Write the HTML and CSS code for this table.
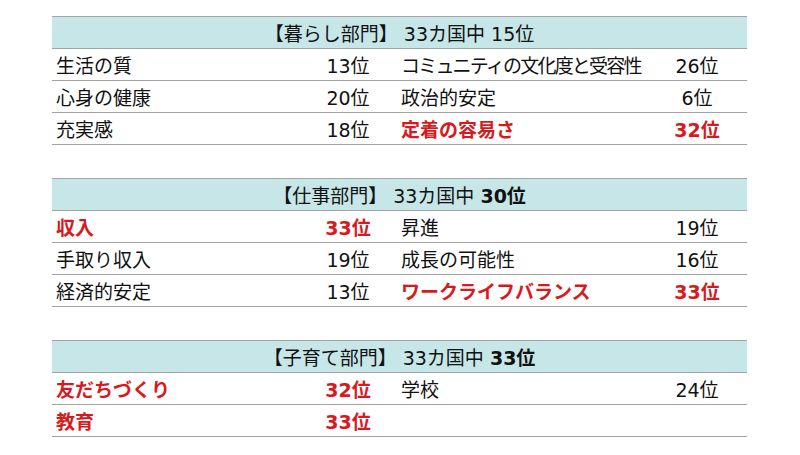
FILE: index.html
```html
<!DOCTYPE html>
<html lang="ja">
<head>
<meta charset="utf-8">
<title>部門別ランキング</title>
<link rel="stylesheet" href="styles.css">
</head>
<body>
<main class="page">
  <section class="block">
    <div class="head">【暮らし部門】 33カ国中 15位</div>
    <div class="row">
      <span class="label">生活の質</span><span class="rank">13位</span>
      <span class="label label-r tight">コミュニティの文化度と受容性</span><span class="rank">26位</span>
    </div>
    <div class="row">
      <span class="label">心身の健康</span><span class="rank">20位</span>
      <span class="label label-r">政治的安定</span><span class="rank">6位</span>
    </div>
    <div class="row">
      <span class="label">充実感</span><span class="rank">18位</span>
      <span class="label label-r hot">定着の容易さ</span><span class="rank hot">32位</span>
    </div>
  </section>

  <section class="block">
    <div class="head">【仕事部門】 33カ国中 <b>30位</b></div>
    <div class="row">
      <span class="label hot">収入</span><span class="rank hot">33位</span>
      <span class="label label-r">昇進</span><span class="rank">19位</span>
    </div>
    <div class="row">
      <span class="label">手取り収入</span><span class="rank">19位</span>
      <span class="label label-r">成長の可能性</span><span class="rank">16位</span>
    </div>
    <div class="row">
      <span class="label">経済的安定</span><span class="rank">13位</span>
      <span class="label label-r hot">ワークライフバランス</span><span class="rank hot">33位</span>
    </div>
  </section>

  <section class="block">
    <div class="head">【子育て部門】 33カ国中 <b>33位</b></div>
    <div class="row">
      <span class="label hot">友だちづくり</span><span class="rank hot">32位</span>
      <span class="label label-r">学校</span><span class="rank">24位</span>
    </div>
    <div class="row">
      <span class="label hot">教育</span><span class="rank hot">33位</span>
      <span class="label label-r"></span><span class="rank"></span>
    </div>
  </section>
</main>
</body>
</html>
```

FILE: styles.css
```css
html, body {
  margin: 0;
  padding: 0;
  background: #ffffff;
}

body {
  font-family: "DejaVu Sans", "Noto Sans CJK JP", sans-serif;
  font-size: 19px;
  color: #111111;
}

.page {
  width: 695px;
  padding: 16px 0 0 52px;
  display: flex;
  flex-direction: column;
  gap: 33px;
}

.block {
  display: flex;
  flex-direction: column;
}

.head {
  height: 31px;
  background: #c6e6e8;
  border-top: 1px solid #a4a4a4;
  border-bottom: 1px solid #a4a4a4;
  display: flex;
  align-items: center;
  justify-content: center;
  white-space: pre;
}

.head b {
  font-weight: bold;
}

.row {
  height: 31px;
  border-bottom: 1px solid #a4a4a4;
  display: grid;
  grid-template-columns: 248px 96px 251px 100px;
  align-items: center;
}

.label {
  padding-left: 4px;
  white-space: nowrap;
}

.label-r {
  padding-left: 5px;
}

.tight {
  letter-spacing: -1.8px;
}

.rank {
  text-align: center;
  white-space: nowrap;
}

.hot {
  color: #d71a20;
  font-weight: bold;
}
```
